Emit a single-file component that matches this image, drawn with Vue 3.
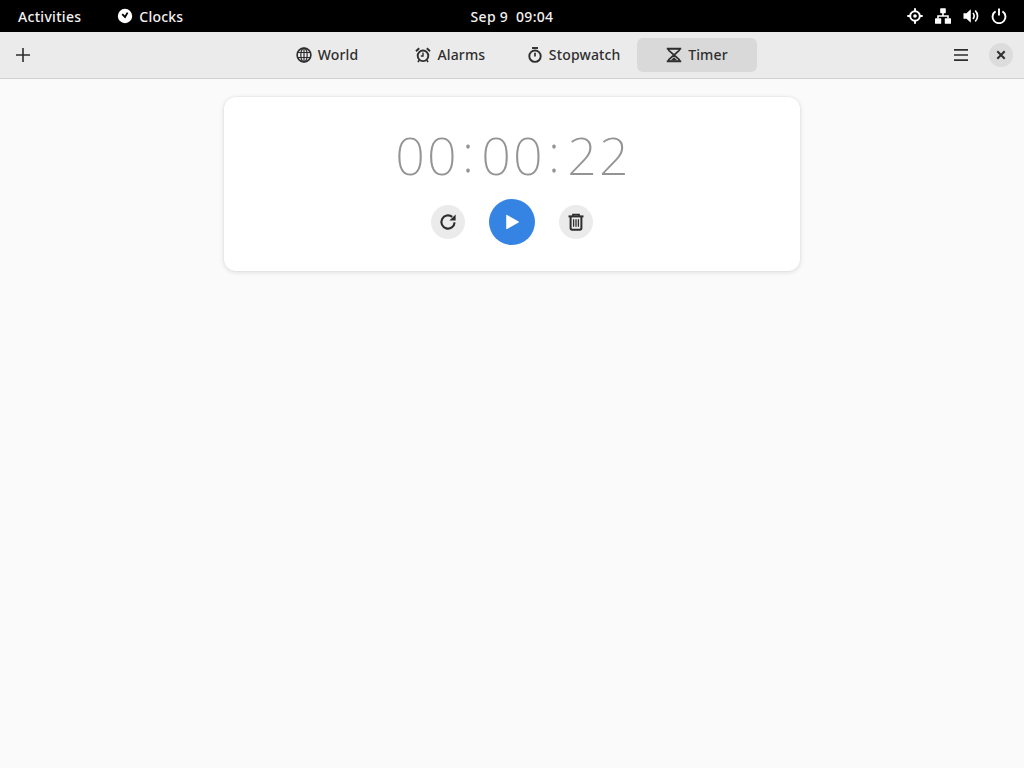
<template>
  <div class="desktop">
    <div class="top-bar">
      <div class="top-left">
        <span class="activities">Activities</span>
        <span class="app-menu">
          <svg width="16" height="16" viewBox="0 0 16 16">
            <circle cx="8" cy="8" r="7.2" fill="#fff" />
            <path d="M5.2 6.2 L8 9 L10.6 4.6" fill="none" stroke="#000" stroke-width="1.8" />
          </svg>
          Clocks
        </span>
      </div>
      <div class="clock">Sep 9&nbsp;&nbsp;09:04</div>
      <div class="status">
        <svg width="16" height="16" viewBox="0 0 16 16" fill="none" stroke="#fff">
          <circle cx="8" cy="8" r="4.8" stroke-width="2" />
          <circle cx="8" cy="8" r="1.8" fill="#fff" stroke="none" />
          <path d="M8 0.3V3.5M8 12.5V15.7M0.3 8H3.5M12.5 8H15.7" stroke-width="2" />
        </svg>
        <svg width="16" height="16" viewBox="0 0 16 16" fill="#fff">
          <rect x="5.2" y="0.2" width="5.6" height="5" rx="0.6" />
          <rect x="0" y="10.2" width="6.2" height="5.6" rx="0.6" />
          <rect x="9.8" y="10.2" width="6.2" height="5.6" rx="0.6" />
          <path d="M7.2 5H8.8V7.2H13.8V10.5H12.2V8.8H3.8V10.5H2.2V7.2H7.2Z" />
        </svg>
        <svg width="16" height="16" viewBox="0 0 16 16">
          <path d="M0.5 5.2H3.5L7.8 1.3V14.7L3.5 10.8H0.5Z" fill="#fff" />
          <path d="M9.9 5A4.2 4.2 0 0 1 9.9 11M12.2 2.6A7.4 7.4 0 0 1 12.2 13.4" fill="none" stroke="#fff" stroke-width="1.7" />
        </svg>
        <svg width="16" height="16" viewBox="0 0 16 16" fill="none" stroke="#fff" stroke-width="1.9">
          <path d="M4.6 3.4A6.4 6.4 0 1 0 11.4 3.4" />
          <path d="M8 0.6V7.5" />
        </svg>
      </div>
    </div>

    <div class="window">
      <header class="header">
        <div class="header-left">
          <svg width="16" height="16" viewBox="0 0 16 16" stroke="#2e2e2e" stroke-width="1.6">
            <path d="M8 1V15M1 8H15" />
          </svg>
        </div>
        <nav class="tabs">
          <button v-for="tab in tabs" :key="tab.name" class="tab" :class="{ active: tab.name === 'Timer' }">
            <svg width="16" height="16" viewBox="0 0 16 16" fill="none" stroke="#2e2e2e" stroke-width="1.6" v-html="tab.icon"></svg>
            <span>{{ tab.name }}</span>
          </button>
        </nav>
        <div class="header-right">
          <svg width="16" height="16" viewBox="0 0 16 16" stroke="#2e2e2e" stroke-width="1.7">
            <path d="M1 2.9H15M1 8H15M1 13.1H15" />
          </svg>
          <button class="close">
            <svg width="10" height="10" viewBox="0 0 10 10" stroke="#2e2e2e" stroke-width="2">
              <path d="M1.3 1.3L8.7 8.7M8.7 1.3L1.3 8.7" />
            </svg>
          </button>
        </div>
      </header>

      <main class="content">
        <section class="card">
          <div class="time">
            <span class="digits">00</span>
            <span class="sep">:</span>
            <span class="digits">00</span>
            <span class="sep">:</span>
            <span class="digits">22</span>
          </div>
          <div class="actions">
            <button class="round">
              <svg width="18" height="18" viewBox="0 0 18 18" fill="none" stroke="#2e2e2e" stroke-width="2.1">
                <path d="M15.6 9.4A6.6 6.6 0 1 1 13.2 3.9" />
                <path d="M16.6 1.4V7.6H10.4Z" fill="#2e2e2e" stroke="none" />
              </svg>
            </button>
            <button class="round play">
              <svg width="16" height="16" viewBox="0 0 16 16" fill="#fff">
                <path d="M2.2 1.3 C2.2 0.9 2.6 0.7 3 0.9 L14.6 7.5 C15 7.7 15 8.3 14.6 8.5 L3 15.1 C2.6 15.3 2.2 15.1 2.2 14.7Z" />
              </svg>
            </button>
            <button class="round">
              <svg width="18" height="18" viewBox="0 0 18 18" fill="none" stroke="#2e2e2e">
                <path d="M1.5 3.4H16.5" stroke-width="2" />
                <path d="M6 3V1.6H12V3" stroke-width="1.7" />
                <path d="M3.6 3.5V15C3.6 16 4.3 16.7 5.3 16.7H12.7C13.7 16.7 14.4 16 14.4 15V3.5" stroke-width="2" />
                <path d="M6.6 6.2V13.8M9 6.2V13.8M11.4 6.2V13.8" stroke-width="1.3" />
              </svg>
            </button>
          </div>
        </section>
      </main>
    </div>
  </div>
</template>

<script setup>
const tabs = [
  {
    name: 'World',
    icon: '<circle cx="8" cy="8" r="6.9"/><ellipse cx="8" cy="8" rx="3.2" ry="6.9" stroke-width="1.2"/><path d="M1 5.5H15M1 10.5H15M8 1V15" stroke-width="1.2"/>'
  },
  {
    name: 'Alarms',
    icon: '<circle cx="8" cy="8.8" r="5.3" stroke-width="1.9"/><path d="M8 5.6V9H5.8" stroke-width="1.4"/><path d="M1 4.2L4.2 1.2M15 4.2L11.8 1.2" stroke-width="1.9"/><path d="M4.2 13.2L3 15.2M11.8 13.2L13 15.2" stroke-width="1.6"/>'
  },
  {
    name: 'Stopwatch',
    icon: '<circle cx="8" cy="9.2" r="5.7" stroke-width="1.9"/><path d="M5 1H11" stroke-width="1.9"/><path d="M8 5.8V9.4" stroke-width="1.7"/>'
  },
  {
    name: 'Timer',
    icon: '<path d="M0.8 1.8H15.2M0.8 14.2H15.2" stroke-width="2"/><path d="M2.8 2V3.4L8 8L2.8 12.6V14M13.2 2V3.4L8 8L13.2 12.6V14" stroke-width="1.7"/><path d="M4.6 13.6L8 10.2L11.4 13.6Z" fill="#2e2e2e" stroke="none"/>'
  }
]
</script>

<style>
html,
body {
  margin: 0;
  background: #fafafa;
}
</style>

<style scoped>
.desktop {
  width: 1024px;
  height: 768px;
  display: flex;
  flex-direction: column;
  overflow: hidden;
  font-family: "Noto Sans", "Open Sans", sans-serif;
}

.top-bar {
  height: 32px;
  flex: none;
  background: #000;
  color: #f2f2f2;
  display: grid;
  grid-template-columns: 1fr auto 1fr;
  align-items: center;
  font-size: 14px;
  font-weight: 500;
}

.top-left {
  display: flex;
  align-items: center;
  padding-left: 18px;
  gap: 36px;
}

.activities {
  letter-spacing: 0.3px;
}

.app-menu {
  display: flex;
  align-items: center;
  gap: 6px;
  letter-spacing: 0.2px;
}

.clock {
  letter-spacing: 0.3px;
}

.status {
  display: flex;
  justify-content: flex-end;
  gap: 12px;
  padding-right: 17px;
}

.window {
  flex: 1;
  display: flex;
  flex-direction: column;
  background: #fafafa;
}

.header {
  height: 46px;
  flex: none;
  background: #ebebeb;
  border-bottom: 1px solid #d1d1d1;
  display: grid;
  grid-template-columns: 1fr auto 1fr;
  align-items: center;
}

.header-left {
  display: flex;
  padding-left: 15px;
}

.header-right {
  display: flex;
  justify-content: flex-end;
  align-items: center;
  gap: 20px;
  padding-right: 11px;
}

.tabs {
  display: flex;
  gap: 3.33px;
}

button {
  border: none;
  padding: 0;
  font: inherit;
  color: inherit;
  display: flex;
  align-items: center;
  justify-content: center;
}

.tab {
  width: 120px;
  height: 34px;
  gap: 6px;
  border-radius: 6px;
  background: transparent;
  color: #2e2e2e;
  font-size: 14px;
  font-weight: 500;
  letter-spacing: 0.15px;
}

.tab span {
  position: relative;
  top: -1px;
}

.tab.active {
  background: #d9d9d9;
}

.close {
  width: 24px;
  height: 24px;
  border-radius: 50%;
  background: #dcdcdc;
}

.content {
  flex: 1;
  padding-top: 18px;
  display: flex;
  flex-direction: column;
  align-items: center;
}

.card {
  width: 576px;
  height: 174px;
  box-sizing: border-box;
  background: #fff;
  border-radius: 12px;
  box-shadow: 0 0 0 1px rgba(0, 0, 0, 0.02), 0 1px 4px 1px rgba(0, 0, 0, 0.09);
  display: flex;
  flex-direction: column;
  align-items: center;
  padding-top: 21px;
}

.time {
  height: 72px;
  padding-left: 2px;
  display: flex;
  align-items: center;
  justify-content: center;
  font-weight: 200;
  font-size: 52px;
  color: #949494;
}

.digits {
  width: 64px;
  text-align: center;
  letter-spacing: 2px;
}

.sep {
  width: 22px;
  text-align: center;
  position: relative;
  top: -3px;
  left: -2px;
}

.actions {
  margin-top: 9px;
  display: flex;
  align-items: center;
  gap: 24px;
}

.round {
  width: 34px;
  height: 34px;
  border-radius: 50%;
  background: #ebebeb;
}

.round.play {
  width: 46px;
  height: 46px;
  background: #3584e4;
}
</style>
